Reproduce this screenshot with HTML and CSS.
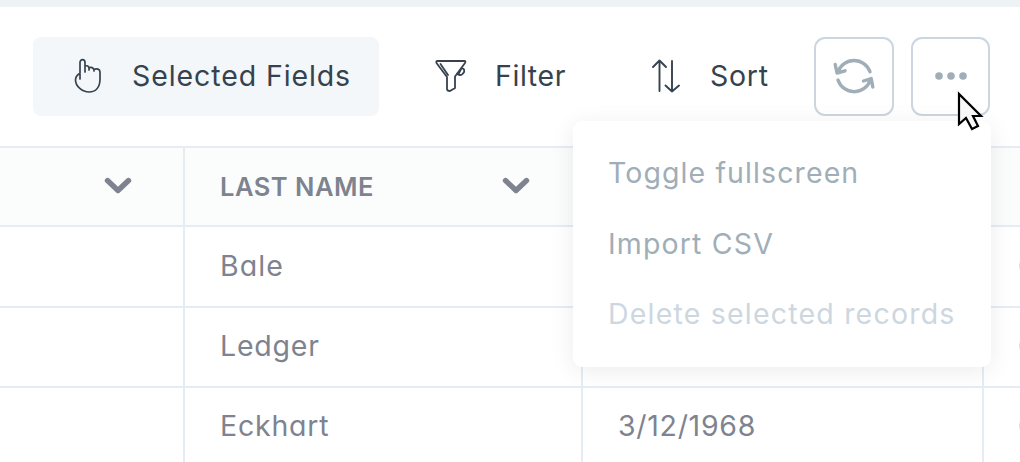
FILE: index.html
```html
<!DOCTYPE html>
<html lang="en">
<head>
<meta charset="utf-8">
<title>Records</title>
<link rel="stylesheet" href="styles.css">
</head>
<body>
<main class="app">
  <header class="toolbar">
    <button class="tool tool-fields">
      <svg class="icon-hand" viewBox="0 0 28 36" fill="none" stroke="currentColor" stroke-width="1.7" stroke-linecap="round" stroke-linejoin="round"><path d="M6 21V4.500C6 .7 11 .7 11 4.500V14M11 8C13 7.300 14.800 8.200 15 10V12M15 10C17 8.700 19.700 9.700 20 12V13M20 11.500C22.600 10.200 26 11 26 14V21C26 29 22 34 15 34C8.500 34 1.500 28.500 1.500 22C1.500 19 3 17 6 15.200"/></svg>
      <span class="t-fields">Selected Fields</span>
    </button>
    <button class="tool tool-filter">
      <svg class="icon-filter" viewBox="0 0 32 34" fill="none" stroke="currentColor" stroke-width="1.8" stroke-linecap="round" stroke-linejoin="round"><path d="M2.500 2H29.500Q31 2 30 4L20 17.500V29L15 32Q12 32 12 30V18L1.500 4Q.8 2 2.500 2ZM5.500 5L13 16M26 10C29 8 30.500 12 28 14.500C26 17 23 16 22 14.500M26 10L24 14"/></svg>
      <span class="t-filter">Filter</span>
    </button>
    <button class="tool tool-sort">
      <svg class="icon-sort" viewBox="0 0 30 36" fill="none" stroke="currentColor" stroke-width="1.9" stroke-linecap="round" stroke-linejoin="round"><path d="M8.500 33V2.500M2 9L8.500 2.500L15 9M21 3V33.500M14.500 27.500L21 33.500L28 27.500"/></svg>
      <span class="t-sort">Sort</span>
    </button>
    <button class="square" aria-label="Refresh">
      <svg class="icon-refresh" viewBox="0 0 42 40" fill="none" stroke="currentColor" stroke-width="3.4" stroke-linecap="round" stroke-linejoin="round"><path d="M37 15.800A17 17 0 0 0 5 15.800M2.200 8.500L4 17L12 14.800M5 24A17 17 0 0 0 37.300 24M30.500 25L38.200 22.500L39.800 31"/></svg>
    </button>
    <button class="square square-more" aria-label="More">
      <svg class="icon-more" viewBox="0 0 32 8" fill="currentColor"><circle cx="4" cy="4" r="3.800"/><circle cx="16" cy="4" r="3.800"/><circle cx="28" cy="4" r="3.800"/></svg>
    </button>
  </header>
  <section class="grid">
    <div class="cell head"><svg class="chevron" viewBox="0 0 28 18"><path d="M3.500 3.500L14 13.500L24.500 3.500"/></svg></div>
    <div class="cell head"><span class="t-head">LAST NAME</span><svg class="chevron" viewBox="0 0 28 18"><path d="M3.500 3.500L14 13.500L24.500 3.500"/></svg></div>
    <div class="cell head"></div>
    <div class="cell head"></div>
    <div class="cell"></div><div class="cell"><span class="t-bale">Bale</span></div><div class="cell"></div><div class="cell"><i class="ring"></i></div>
    <div class="cell"></div><div class="cell"><span class="t-ledger">Ledger</span></div><div class="cell"></div><div class="cell"><i class="ring"></i></div>
    <div class="cell"></div><div class="cell"><span class="t-eck">Eckhart</span></div><div class="cell"><span class="t-date">3/12/1968</span></div><div class="cell"><i class="ring"></i></div>
  </section>
  <nav class="menu">
    <a class="item t-toggle">Toggle fullscreen</a>
    <a class="item t-import">Import CSV</a>
    <a class="item disabled t-delete">Delete selected records</a>
  </nav>
  <svg class="cursor" viewBox="0 0 26 40"><path d="M2 3V33L9 27L15 38L21 35L16 25H24Z" fill="#f7f7f7" stroke="#000" stroke-width="2.200"/></svg>
</main>
</body>
</html>
```
FILE: styles.css
```css
* { box-sizing: border-box; }
body { margin: 0; background: #fff; }
.app {
  position: relative;
  width: 1020px;
  height: 462px;
  overflow: hidden;
  border-top: 7px solid #edf2f5;
  font-family: Inter, "Open Sans", sans-serif;
  font-size: 28.5px;
  font-weight: 380;
  font-feature-settings: "cv11";
  line-height: 42px;
  color: #7e838f;
  white-space: nowrap;
}
svg { display: block; flex: none; overflow: visible; }
.toolbar { display: flex; height: 139px; padding: 30px 30px 0 33px; }
button { font: inherit; font-feature-settings: inherit; border: 0; margin: 0; padding: 0; background: none; }
.tool { display: flex; align-items: center; height: 79px; padding-bottom: 2px; color: #36424e; }
.tool-fields { width: 346px; padding-left: 41px; gap: 30px; border-radius: 8px; background: #f3f7fa; }
.tool-filter { width: 215px; padding-left: 56px; gap: 28px; }
.tool-sort { width: 220px; padding-left: 57px; gap: 29px; }
.icon-hand { width: 28px; height: 36px; }
.icon-filter { width: 32px; height: 34px; }
.icon-sort { width: 30px; height: 36px; }
.square {
  display: flex;
  align-items: center;
  justify-content: center;
  width: 80px;
  height: 79px;
  padding-bottom: 2px;
  border: 2px solid #cbd6e0;
  border-radius: 11px;
  color: #a0aeb8;
}
.square-more { width: 79px; margin-left: 17px; }
.icon-refresh { width: 42px; height: 40px; }
.icon-more { width: 32px; height: 8px; }
.grid {
  display: grid;
  grid-template-columns: 185px 398px 401px 200px;
  grid-template-rows: 79px 81px 80px 80px;
  border-top: 2px solid #e6edf2;
}
.cell {
  display: flex;
  align-items: center;
  justify-content: space-between;
  padding: 0 51px 2px 35px;
  border-right: 2px solid #e6edf2;
  border-bottom: 2px solid #e6edf2;
}
.head { padding-bottom: 0; background: #fbfdfc; font-size: 25.5px; font-weight: 600; }
.chevron { width: 28px; height: 18px; margin: 0 0 2px auto; fill: none; stroke: #7e838f; stroke-width: 5.4; stroke-linecap: round; stroke-linejoin: round; }
.ring { width: 20px; height: 20px; border: 1px solid #d6d9dd; border-radius: 50%; }
.menu {
  position: absolute;
  left: 573px;
  top: 114px;
  width: 418px;
  height: 246px;
  padding: 17px 35px;
  border-radius: 9px;
  background: #fff;
  box-shadow: 0 4px 24px rgba(0, 0, 0, .08);
  color: #a0aeb8;
}
.item { display: block; height: 70.5px; line-height: 70.5px; }
.disabled { color: #cdd7df; }
.cursor { position: absolute; left: 957px; top: 84px; width: 26px; height: 40px; }
.t-fields { letter-spacing: .9px; }
.t-filter { letter-spacing: .6px; }
.t-sort { letter-spacing: .7px; }
.t-head { letter-spacing: .5px; }
.t-bale { letter-spacing: 1.1px; }
.t-ledger { letter-spacing: .8px; }
.t-eck { letter-spacing: .8px; }
.t-date { letter-spacing: .7px; }
.t-toggle { letter-spacing: 1.1px; }
.t-import { letter-spacing: 1.15px; }
.t-delete { letter-spacing: 1.2px; }
```
